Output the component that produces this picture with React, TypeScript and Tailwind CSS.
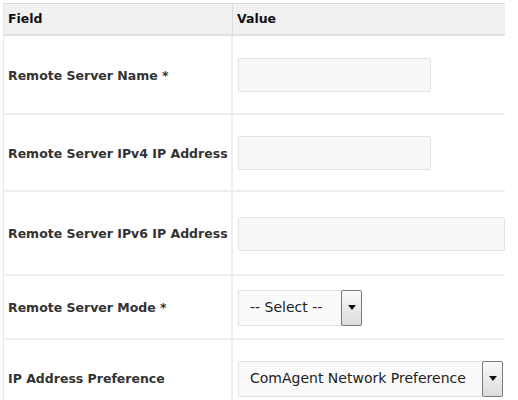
import React from 'react'

const font = { fontFamily: '"DejaVu Sans", Verdana, sans-serif' }

function TextBox({ width }: { width: string }) {
  return (
    <div
      className={`h-[34px] ${width} rounded-[2px] border border-[#e2e2e2] bg-[#f8f8f8]`}
    />
  )
}

function SelectBox({ label, width }: { label: string; width: string }) {
  return (
    <div className="flex items-stretch h-[36px]">
      <div
        className={`${width} rounded-l-[2px] border border-[#e2e2e2] bg-[#fafafa] flex items-center pl-[11px] text-[14px] text-[#222]`}
      >
        {label}
      </div>
      <div className="w-[21px] -ml-px border border-[#7a7a7a] rounded-[2px] bg-gradient-to-b from-[#fafafa] to-[#dcdcdc] flex items-center justify-center">
        <svg width="8" height="5" viewBox="0 0 8 5">
          <path d="M0 0 L8 0 L4 5 Z" fill="#111" />
        </svg>
      </div>
    </div>
  )
}

const rows: { label: string; height: string; control: React.ReactNode }[] = [
  { label: 'Remote Server Name *', height: 'h-[79px]', control: <TextBox width="w-[193px]" /> },
  { label: 'Remote Server IPv4 IP Address', height: 'h-[77px]', control: <TextBox width="w-[193px]" /> },
  { label: 'Remote Server IPv6 IP Address', height: 'h-[84px]', control: <TextBox width="w-[268px]" /> },
  { label: 'Remote Server Mode *', height: 'h-[64px]', control: <SelectBox label="-- Select --" width="w-[104px]" /> },
  { label: 'IP Address Preference', height: 'h-[78px]', control: <SelectBox label="ComAgent Network Preference" width="w-[245px]" /> },
]

export default function App() {
  return (
    <div className="min-h-screen bg-white pt-[3px] pl-[3px] overflow-hidden" style={font}>
      <div className="w-[502px]">
        {/* Header */}
        <div className="flex h-[33px] border-t border-[#d3dae0] border-b-2 border-b-[#e0e0e0] bg-[#f1f1f1] text-[12.5px] font-bold text-[#111]">
          <div className="w-[230px] flex items-center pl-[4px] border-l border-[#e4e4e4] border-r border-r-[#dcdcdc]">Field</div>
          <div className="flex-1 flex items-center pl-[4px]">Value</div>
        </div>

        {/* Rows */}
        {rows.map((row, index) => (
          <div key={index} className={`flex ${row.height} border-b-2 border-[#eeeeee]`}>
            <div className="w-[230px] shrink-0 flex items-center pl-[4px] pt-[3px] border-l border-[#e8e8e8] border-r-2 border-r-[#eeeeee] text-[12.5px] font-bold text-[#333] whitespace-nowrap">
              {row.label}
            </div>
            <div className="flex-1 flex items-center pl-[5px] pt-[1px] overflow-hidden">{row.control}</div>
          </div>
        ))}
      </div>
    </div>
  )
}
